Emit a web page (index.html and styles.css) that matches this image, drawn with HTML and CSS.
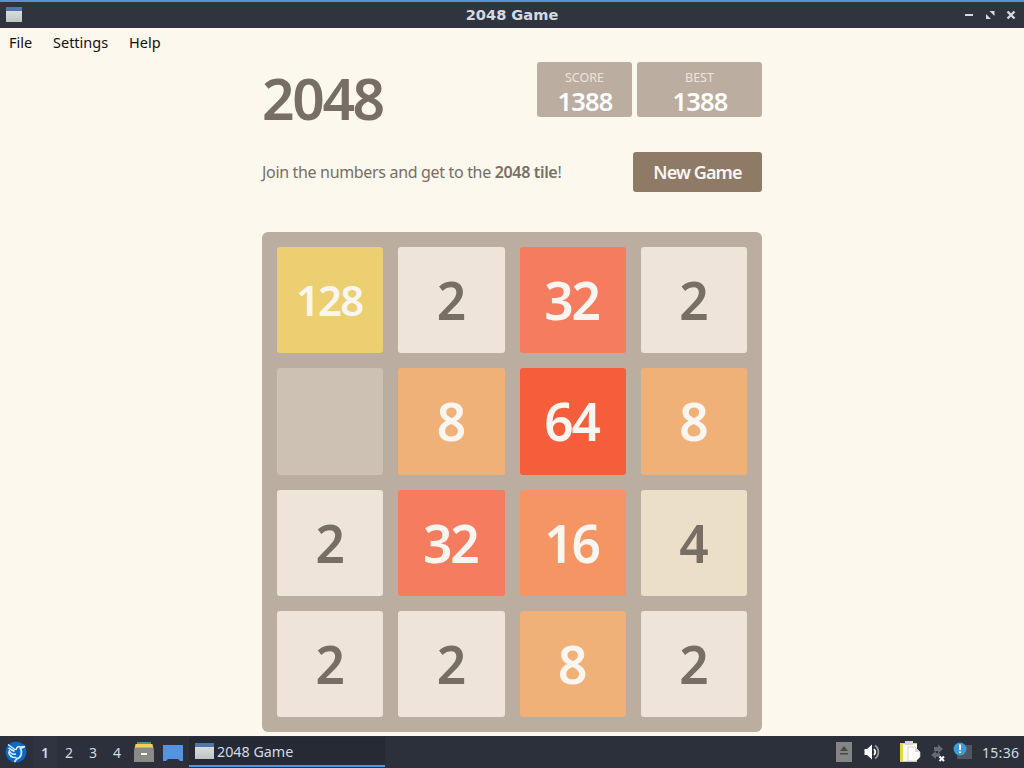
FILE: index.html
```html
<!DOCTYPE html>
<html lang="en">
<head>
    <meta charset="utf-8">
    <title>2048 Game</title>
    <link rel="stylesheet" href="styles.css">
</head>
<body>
    <div class="titlebar">
        <span class="window-icon"></span>
        <h1 class="window-title">2048 Game</h1>
        <svg class="window-buttons" width="56" height="14" viewBox="0 0 56 14">
            <path d="M1 7h8" stroke="#d3dae3" stroke-width="2"/>
            <path d="M25.5 3h5v5zM22 6v5h5z" fill="#d3dae3"/>
            <path d="M43.5 3.5l7 7M50.5 3.5l-7 7" stroke="#d3dae3" stroke-width="2.4"/>
        </svg>
    </div>

    <div class="window">
        <div class="menubar">
            <span class="menu-file">File</span>
            <span class="menu-settings">Settings</span>
            <span class="menu-help">Help</span>
        </div>
        <div class="container">
            <div class="heading">
                <h2 class="title">2048</h2>
                <div class="scores">
                    <div class="score-box"><span class="label">SCORE</span><span class="value">1388</span></div>
                    <div class="score-box best"><span class="label">BEST</span><span class="value">1388</span></div>
                </div>
            </div>
            <div class="intro">
                <p>Join the numbers and get to the <strong>2048 tile</strong>!</p>
                <a class="new-game"><span>New Game</span></a>
            </div>
            <div class="board">
                <div class="tile tile-128"><span>128</span></div>
                <div class="tile tile-2"><span>2</span></div>
                <div class="tile tile-32"><span>32</span></div>
                <div class="tile tile-2"><span>2</span></div>

                <div class="tile"></div>
                <div class="tile tile-8"><span>8</span></div>
                <div class="tile tile-64"><span>64</span></div>
                <div class="tile tile-8"><span>8</span></div>

                <div class="tile tile-2"><span>2</span></div>
                <div class="tile tile-32"><span>32</span></div>
                <div class="tile tile-16"><span>16</span></div>
                <div class="tile tile-4"><span>4</span></div>

                <div class="tile tile-2"><span>2</span></div>
                <div class="tile tile-2"><span>2</span></div>
                <div class="tile tile-8"><span>8</span></div>
                <div class="tile tile-2"><span>2</span></div>
            </div>
        </div>
    </div>

    <div class="taskbar">
        <svg class="start" width="22" height="22" viewBox="0 0 22 22">
            <circle cx="11" cy="11" r="10.5" fill="#0a68c8"/>
            <path d="M3 3.500l7.500 5.500M3.500 7l6 3.500M11 9c.5-3 2.500-4 4.500-3l4.500-.5-4 1.800" fill="none" stroke="#d9efff" stroke-width="1.500"/>
            <path d="M15 6.500c3 5 1.500 10-3.500 11.500l-2 3" fill="none" stroke="#d9efff" stroke-width="1.700"/>
            <path d="M3.500 10.500c1 5 4 6.500 8 6M4 9c1.500 3.500 4 5 7 4" fill="none" stroke="#d9efff" stroke-width="1.500"/>
        </svg>
        <ul class="desktops">
            <li class="active">1</li>
            <li>2</li>
            <li>3</li>
            <li>4</li>
        </ul>
        <svg class="files" width="20" height="20" viewBox="0 0 20 20">
            <path d="M3 0h14v3H3z" fill="#3aa17e"/>
            <path d="M1.500 2h17l1 5H.5z" fill="#f2cf57"/>
            <path d="M1.500 5.500h17L20 8v12H0V8z" fill="#8a8b86"/>
            <path d="M7 11h6v2H7z" fill="#fff"/>
        </svg>
        <svg class="desktop-icon" width="20" height="16" viewBox="0 0 20 16">
            <path d="M0 0h20v16h-3l-2-2H5l-2 2H0z" fill="#5294e2"/>
        </svg>
        <div class="task"><span class="window-icon"></span><span class="task-name">2048 Game</span></div>

        <div class="tray">
            <svg width="188" height="26" viewBox="0 0 188 26">
                <path d="M2 3h16v20H2z" fill="#858585"/>
                <path d="M6 12l4-5 4 5zM6 14h8v1.500H6z" fill="#4a4a4a"/>

                <path d="M30.500 10h2.500l5-4.500v15l-5-4.500h-2.500z" fill="#fff"/>
                <path d="M40 10q2.500 3 0 6" fill="none" stroke="#fff" stroke-width="1.800"/>
                <path d="M41 6.500c4.500 3 4.500 10 0 13" fill="none" stroke="#9a9da6" stroke-width="1.700"/>

                <path d="M66 4h17v19H66z" fill="#e0dc37"/>
                <path d="M69 5h14v17H69z" fill="#f8f8ef"/>
                <path d="M71 2h8v4h-8z" fill="#d7d7cf"/>
                <path d="M74 8h7l5 5v5l-4 4h-8z" fill="#fff" stroke="#c9cab8" stroke-width=".7"/>
                <path d="M81 8v5h5" fill="#d9d9ce"/>

                <path d="M104 5.500l5 4.500-5 4.500v-2.500h-4V8h4z" fill="#656a76"/>
                <path d="M102 12l-5 4 5 4v-2.200h4v-3.600h-4z" fill="#656a76"/>
                <path d="M105.500 17.500l4.500 4.500m0-4.500l-4.500 4.500" stroke="#fff" stroke-width="2"/>

                <path d="M123 6h15v14h-15z" fill="#515660"/>
                <circle cx="126" cy="10" r="6.500" fill="#3c9ddd"/>
                <path d="M126 5.500v5.500m0 1.500V14" stroke="#fff" stroke-width="2"/>
            </svg>
            <span class="clock">15:36</span>
        </div>
    </div>
</body>
</html>
```
FILE: styles.css
```css
* {
    margin: 0;
    padding: 0;
    box-sizing: border-box;
}

body {
    display: flex;
    flex-direction: column;
    width: 1024px;
    height: 768px;
    overflow: hidden;
    background: #fcf8ee;
    color: #776e65;
    font-family: "Noto Sans", "Open Sans", sans-serif;
}

.titlebar {
    display: flex;
    align-items: center;
    height: 28px;
    padding: 0 4px 0 6px;
    border-top: 2px solid #5590dc;
    background: #2f343f;
}

.window-icon {
    width: 16px;
    height: 15px;
    background: linear-gradient(#4d78ae 0 4px, #d8dcdd 4px, #bfc4c3);
}

.titlebar .window-icon {
    margin-bottom: 1px;
}

.window-title {
    flex: 1;
    padding-left: 38px;
    text-align: center;
    color: #d3dae3;
    font: bold 14.6px/26px "DejaVu Sans", sans-serif;
}

.window {
    height: 708px;
}

.menubar {
    display: flex;
    height: 34px;
    padding: 3px 0 0 9px;
    color: #111;
    font-size: 14.5px;
    line-height: 22px;
}

.menu-file {
    width: 44px;
}

.menu-settings {
    width: 76px;
}

.container {
    width: 500px;
    margin: 0 auto;
}

.heading {
    display: flex;
    justify-content: space-between;
    height: 90px;
}

.title {
    font-size: 57px;
    line-height: 73px;
    letter-spacing: -2.4px;
    font-weight: 600;
}

.scores {
    display: flex;
    gap: 5px;
}

.score-box {
    width: 95px;
    height: 55px;
    padding-top: 7px;
    border-radius: 3px;
    background: #bbada0;
    color: #fff;
    text-align: center;
}

.score-box.best {
    width: 125px;
}

.label,
.value {
    display: block;
}

.label {
    color: #eee4da;
    font-size: 12.5px;
    line-height: 17px;
}

.value {
    padding-left: 1px;
    font-size: 25.5px;
    font-weight: 600;
    line-height: 31px;
    letter-spacing: -.8px;
}

.intro {
    display: flex;
    justify-content: space-between;
    height: 80px;
    font-size: 16px;
    line-height: 40px;
    letter-spacing: -.33px;
}

.intro strong {
    font-weight: 600;
}

.new-game {
    width: 129px;
    height: 40px;
    border-radius: 3px;
    background: #8f7a66;
    color: #f9f6f2;
    font-size: 18px;
    font-weight: 600;
    letter-spacing: -.9px;
    text-align: center;
}

.board {
    display: grid;
    grid-template-columns: repeat(4, 106.25px);
    grid-auto-rows: 106.25px;
    gap: 15px;
    width: 500px;
    height: 500px;
    padding: 15px;
    border-radius: 6px;
    background: #bbada0;
}

.tile {
    padding-right: 2px;
    border-radius: 3px;
    background: #cdc1b4;
    color: #f9f6f2;
    font-size: 51.5px;
    font-weight: 600;
    line-height: 106px;
    letter-spacing: -2px;
    text-align: center;
}

.tile-2 {
    background: #eee4da;
    color: #776e65;
}

.tile-4 {
    background: #ebdfc8;
    color: #776e65;
}

.tile-8 {
    background: #f0b179;
}

.tile-16 {
    background: #f59563;
}

.tile-32 {
    background: #f57c5f;
}

.tile-64 {
    background: #f65d3b;
}

.tile-128 {
    background: #ebcf71;
    font-size: 42px;
}

.taskbar {
    display: flex;
    align-items: center;
    height: 32px;
    padding-left: 5px;
    background: #2b303b;
    color: #d3dae3;
    font-size: 14px;
}

.desktops {
    display: flex;
    margin-left: 6px;
    list-style: none;
}

.desktops li {
    width: 24px;
    height: 32px;
    line-height: 34px;
    text-align: center;
}

.desktops .active {
    background: #303440;
    font-weight: 600;
}

.files {
    margin-left: 5px;
}

.desktop-icon {
    margin: 2px 0 0 9px;
}

.task {
    display: flex;
    align-items: center;
    width: 196px;
    height: 30px;
    margin-left: 6px;
    padding-left: 6px;
    border-bottom: 2px solid #5294e2;
    background: #262a34;
}

.task .window-icon {
    width: 19px;
    height: 16px;
}

.task-name {
    margin-left: 3px;
    font-size: 14.3px;
}

.tray {
    display: flex;
    align-items: center;
    margin-left: auto;
    width: 190px;
}

.tray svg {
    flex: none;
    width: 188px;
    margin-right: -40px;
}

.clock {
    letter-spacing: .3px;
}
```
